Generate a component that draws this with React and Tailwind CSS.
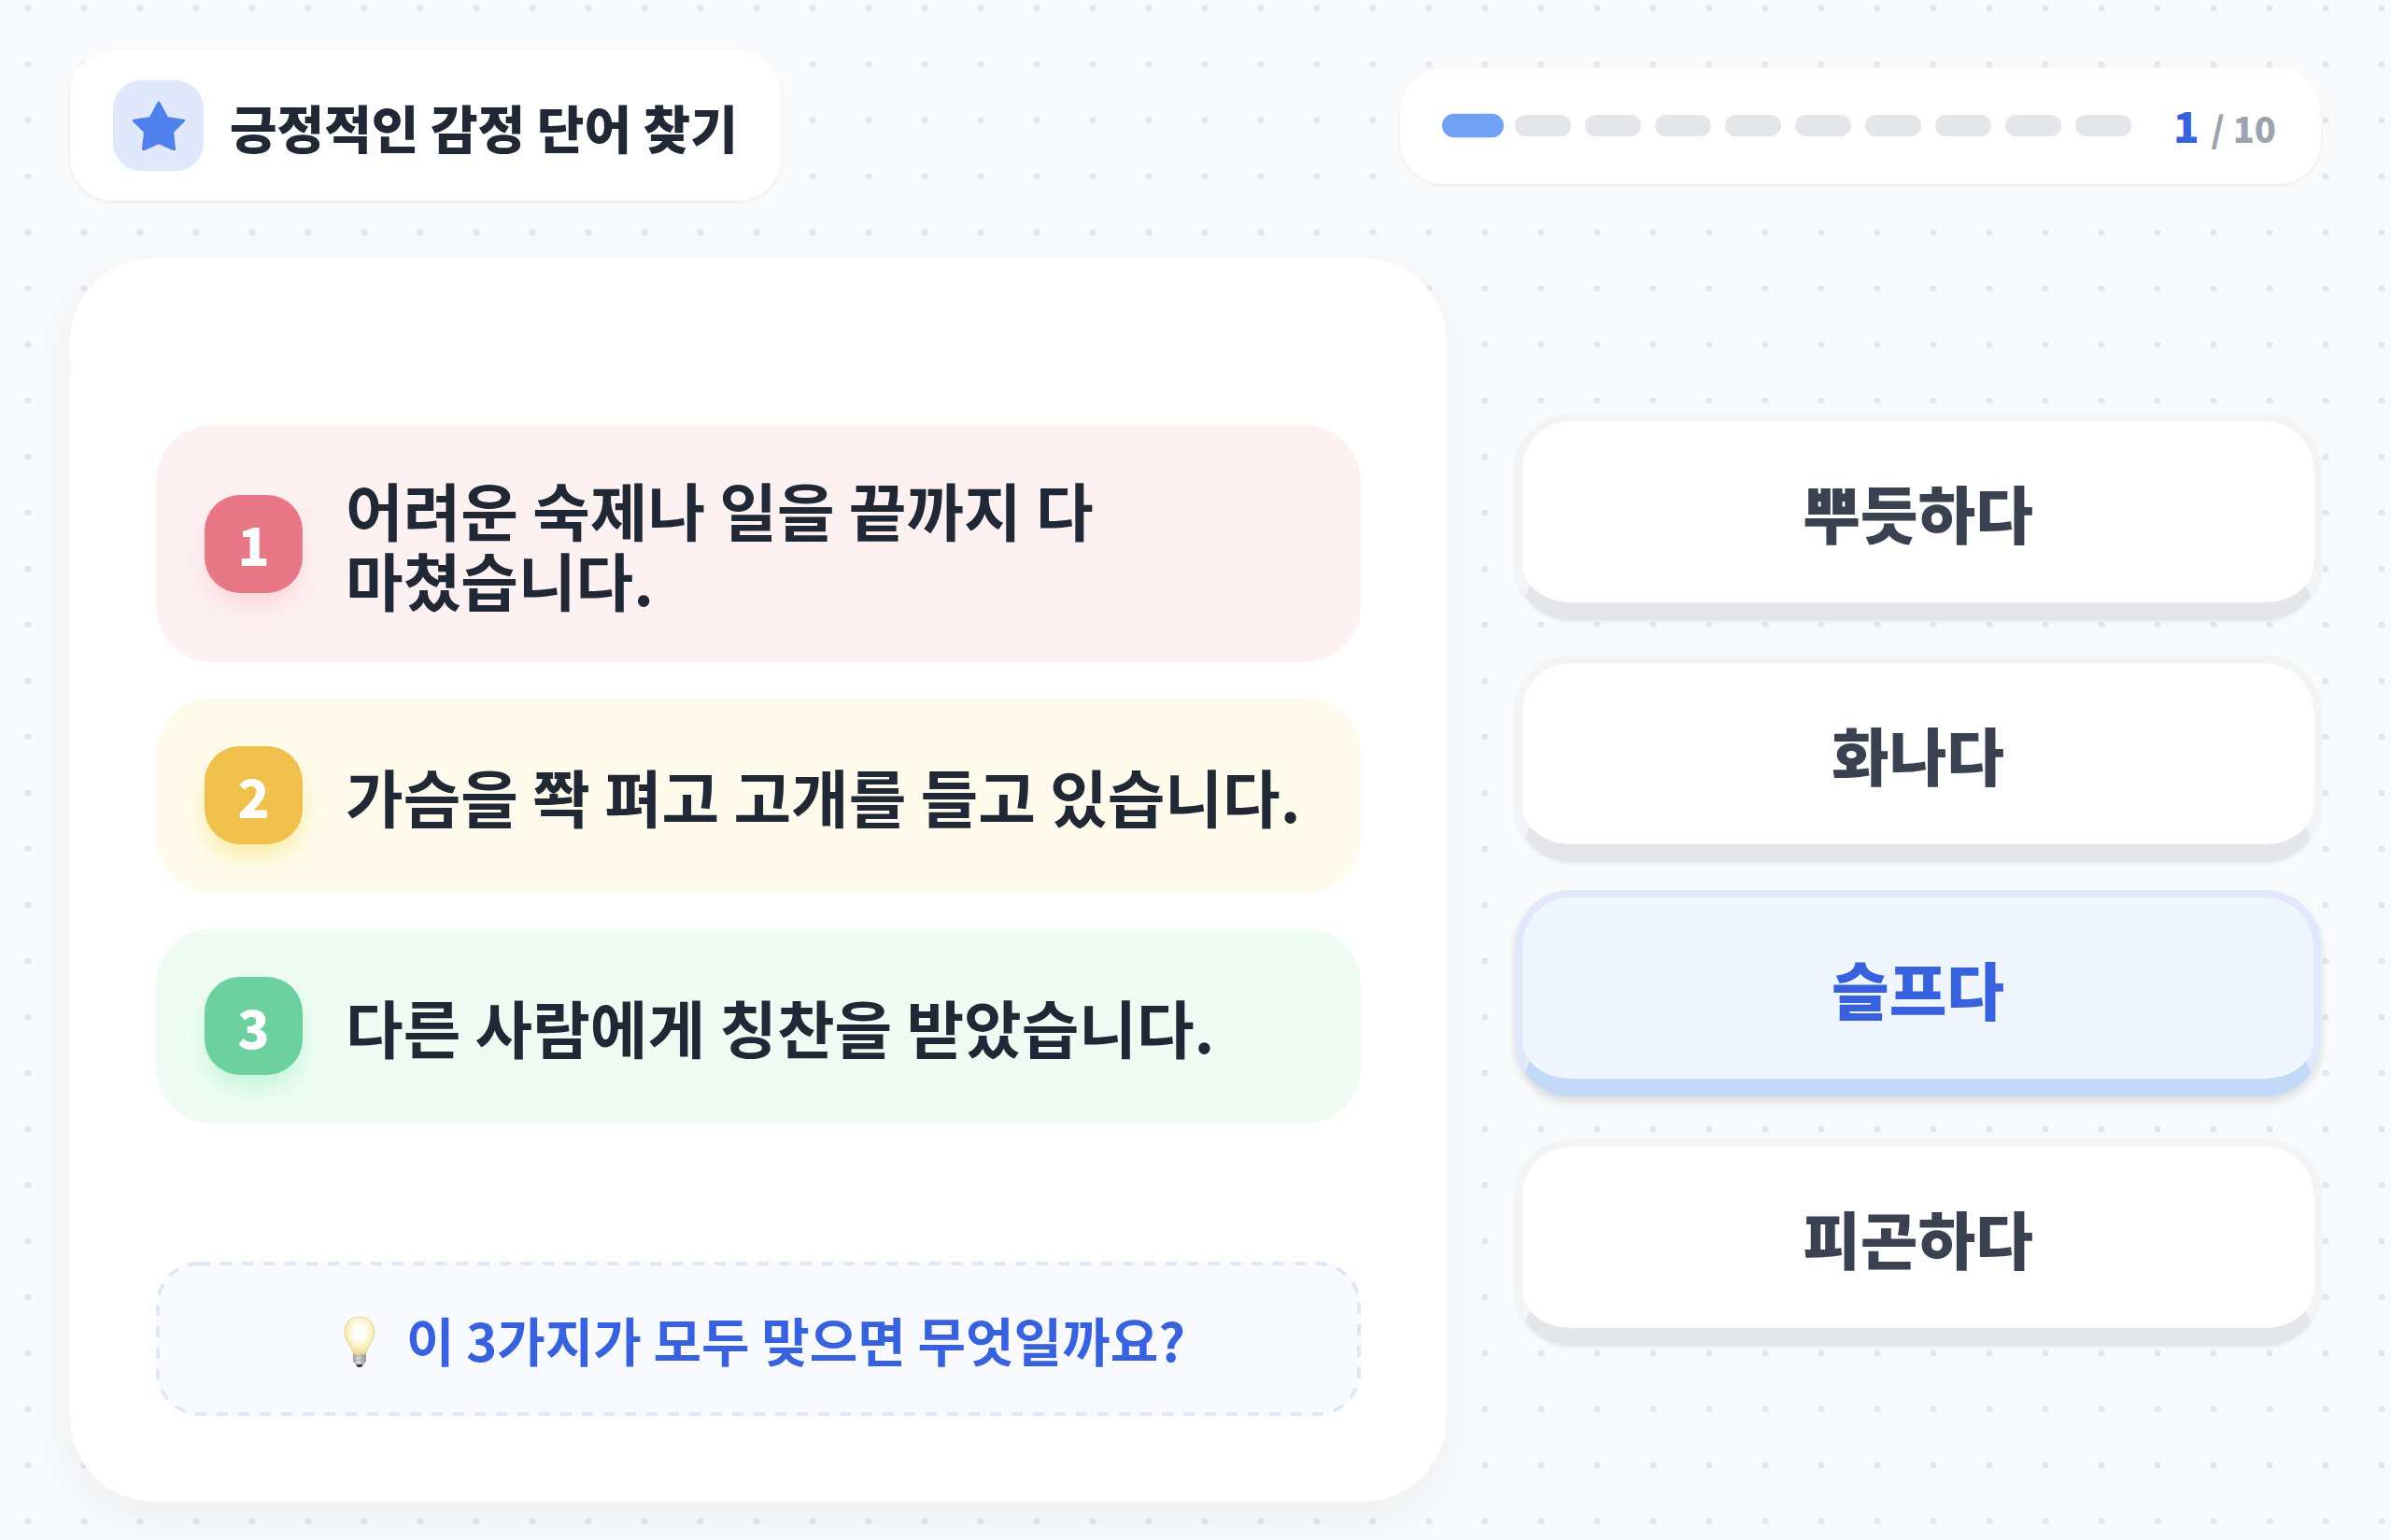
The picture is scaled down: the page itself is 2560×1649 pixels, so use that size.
const TOTAL = 10;
const current = 1;

const statements = [
  { text: '어려운 숙제나 일을 끝까지 다 마쳤습니다.', box: 'bg-[#fdf1f2]', badge: 'bg-[#e87886] shadow-[0_15px_26px_-4px_#fbd3d8]' },
  { text: '가슴을 쫙 펴고 고개를 들고 있습니다.', box: 'bg-[#fefbec]', badge: 'bg-[#f0c04c] shadow-[0_15px_26px_-4px_#fbeaa0]' },
  { text: '다른 사람에게 칭찬을 받았습니다.', box: 'bg-[#eefcf4]', badge: 'bg-[#6dd19f] shadow-[0_15px_26px_-4px_#bff5d6]' },
];

const answers = ['뿌듯하다', '화나다', '슬프다', '피곤하다'];
const active = 2;

function Star() {
  return (
    <svg viewBox="0 0 166 160" className="w-14" fill="#4f80ee" stroke="#4f80ee" strokeWidth="9" strokeLinejoin="round" aria-hidden="true">
      <path d="M83 6L109 55L162 63L126 98L132 154L83 132L34 154L40 98L4 63L57 55z" />
    </svg>
  );
}

function Bulb() {
  return (
    <svg viewBox="0 -5 60 60" className="size-[60px]" aria-hidden="true">
      <defs>
        <radialGradient id="glass" cx="0.5" cy="0.42" r="0.56">
          <stop offset="0" stopColor="#ffffff" />
          <stop offset="0.4" stopColor="#fffdf2" />
          <stop offset="0.75" stopColor="#faeebb" />
          <stop offset="1" stopColor="#ecd993" />
        </radialGradient>
        <linearGradient id="metal" x1="0" x2="1">
          <stop offset="0" stopColor="#9a9a9a" />
          <stop offset="0.4" stopColor="#dcdcdc" />
          <stop offset="1" stopColor="#909090" />
        </linearGradient>
      </defs>
      <path d="M23 38h14v9c0 2-1 3-2 4l-2 2h-6l-2-2c-1-1-2-2-2-4z" fill="url(#metal)" />
      <path d="M23 44l14-2M23 48l14-2" stroke="#a8a8a8" />
      <path d="M26 52h8l-2 3h-4z" fill="#3c3c3c" />
      <path d="M30 1C20 1 14 8 14 17c0 6 3 10 5 14 2 3 3 6 4 9 2 1 12 1 14 0 1-3 2-6 4-9 2-4 5-8 5-14C46 8 40 1 30 1z" fill="url(#glass)" stroke="#e8d7a0" />
    </svg>
  );
}

export default function App() {
  return (
    <div className="flex min-h-screen flex-col bg-[#f9fafc] bg-[radial-gradient(circle_at_30px_9px,#e5e6eb_3px,transparent_4px)] bg-[size:60px_60px] px-[75px] pt-[54px] pb-[41px] font-['Noto_Sans_CJK_KR',sans-serif]">
      <header className="flex items-center justify-between">
        <div className="flex items-center gap-7 rounded-[46px] bg-white px-[46px] py-8 shadow-[0_2px_4px_rgba(0,0,0,0.06)]">
          <div className="flex size-[97px] items-center justify-center rounded-[30px] bg-[#dfe9fb]">
            <Star />
          </div>
          <h1 className="text-[55px] leading-[76px] font-black text-[#212835]">긍정적인 감정 단어 찾기</h1>
        </div>

        <div className="flex items-center gap-[45px] rounded-[46px] bg-white px-12 py-7 shadow-[0_2px_4px_rgba(0,0,0,0.06)]">
          <div className="flex gap-[15px]">
            {Array.from({ length: TOTAL }, (_, i) => (
              <div
                key={i}
                className={`h-[23px] w-[60px] rounded-full ${i < current ? 'scale-110 bg-[#71a1f2]' : 'bg-[#e5e6ea]'}`}
              />
            ))}
          </div>
          <p className="text-[38px] leading-[64px] font-black text-[#9ca3af]">
            <span className="mr-1 text-[46px] text-[#3861de]">{current}</span> / {TOTAL}
          </p>
        </div>
      </header>

      <main className="mt-[61px] grid flex-1 grid-cols-[1474fr_863fr] gap-[73px]">
        <section className="flex min-w-0 flex-col rounded-[90px] bg-white p-[92px] shadow-[0_15px_60px_rgba(0,0,0,0.05)]">
          <ol className="flex flex-1 flex-col justify-center gap-[38px]">
            {statements.map((s, i) => (
              <li key={i} className={`flex items-center gap-[46px] rounded-[60px] p-[52px] ${s.box}`}>
                <span className={`flex size-[105px] shrink-0 items-center justify-center rounded-[38px] text-[56px] font-black text-white ${s.badge}`}>
                  {i + 1}
                </span>
                <p className="-mr-6 text-[67px] leading-[75px] font-bold break-keep text-[#212835]">{s.text}</p>
              </li>
            ))}
          </ol>

          <div className="relative mt-[61px] flex items-center justify-center gap-5 rounded-[46px] bg-[#f8faff] py-[42px] text-[56px] leading-[81px] font-bold text-[#3861de]">
            {/* dashed outline, longer dashes than border-dashed gives */}
            <svg className="absolute inset-0 size-full" fill="none" aria-hidden="true">
              <rect x="2" y="2" rx="44" className="h-[calc(100%-4px)] w-[calc(100%-4px)]" stroke="#dfe7f8" strokeWidth="4" strokeDasharray="12 11" />
            </svg>
            <Bulb />
            <p>이 3가지가 모두 맞으면 무엇일까요?</p>
          </div>
        </section>

        <section className="flex min-w-0 flex-col justify-center gap-[38px]">
          {answers.map((a, i) => (
            <button
              key={a}
              type="button"
              className={`h-[221px] rounded-[60px] border-8 border-b-[19px] text-[67px] font-black ${
                i === active
                  ? '-translate-y-2 border-[#dfe9fb] border-b-[#c3d9fa] bg-[#eff6ff] text-[#3861de] shadow-[0_6px_10px_rgba(0,0,0,0.12)]'
                  : 'border-[#f3f4f6] border-b-[#e5e6ea] bg-white text-[#3a4150] shadow-[0_2px_4px_rgba(0,0,0,0.06)]'
              }`}
            >
              {a}
            </button>
          ))}
        </section>
      </main>
    </div>
  );
}
